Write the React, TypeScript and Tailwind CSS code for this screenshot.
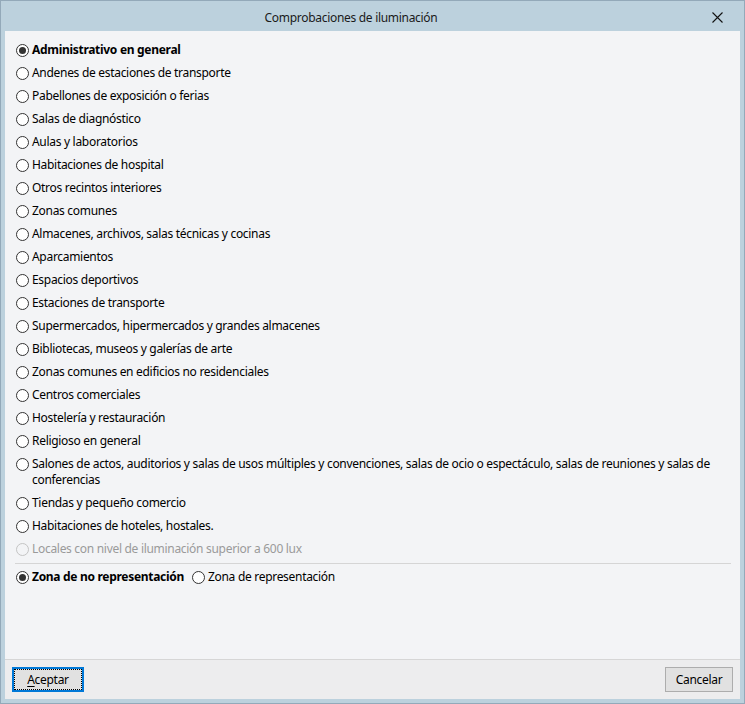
import React from "react";

const items: { label: string; checked?: boolean; disabled?: boolean }[] = [
  { label: "Administrativo en general", checked: true },
  { label: "Andenes de estaciones de transporte" },
  { label: "Pabellones de exposición o ferias" },
  { label: "Salas de diagnóstico" },
  { label: "Aulas y laboratorios" },
  { label: "Habitaciones de hospital" },
  { label: "Otros recintos interiores" },
  { label: "Zonas comunes" },
  { label: "Almacenes, archivos, salas técnicas y cocinas" },
  { label: "Aparcamientos" },
  { label: "Espacios deportivos" },
  { label: "Estaciones de transporte" },
  { label: "Supermercados, hipermercados y grandes almacenes" },
  { label: "Bibliotecas, museos y galerías de arte" },
  { label: "Zonas comunes en edificios no residenciales" },
  { label: "Centros comerciales" },
  { label: "Hostelería y restauración" },
  { label: "Religioso en general" },
  {
    label:
      "Salones de actos, auditorios y salas de usos múltiples y convenciones, salas de ocio o espectáculo, salas de reuniones y salas de conferencias",
  },
  { label: "Tiendas y pequeño comercio" },
  { label: "Habitaciones de hoteles, hostales." },
  { label: "Locales con nivel de iluminación superior a 600 lux", disabled: true },
];

function Radio({ checked, disabled }: { checked?: boolean; disabled?: boolean }) {
  return (
    <span
      className={
        "mt-[1.5px] flex h-[13px] w-[13px] shrink-0 items-center justify-center rounded-full border " +
        (disabled ? "border-[#c4c4c4] bg-[#f3f4f6]" : "border-[#333333] bg-white")
      }
    >
      {checked && <span className="h-[7px] w-[7px] rounded-full bg-[#333333]" />}
    </span>
  );
}

export default function App() {
  return (
    <div
      className="flex h-[704px] w-[745px] flex-col border border-[#93a9b9] bg-[#bcd1dd] text-[12px] leading-[16px] tracking-[-0.3px] text-black"
      style={{ fontFamily: '"Noto Sans", "Open Sans", sans-serif' }}
    >
      <div className="flex h-[30px] shrink-0 items-center pt-[3px]">
        <div className="flex-1 pl-[2px] text-center text-[12px] text-[#1a1a1a]">Comprobaciones de iluminación</div>
        <div className="mr-[9px] flex w-[36px] items-center justify-center">
          <svg width="11" height="11" viewBox="0 0 11 11">
            <path d="M0.5 0.5 L10.5 10.5 M10.5 0.5 L0.5 10.5" stroke="#111" strokeWidth="1.1" />
          </svg>
        </div>
      </div>
      <div className="mx-[4px] mb-[4px] flex flex-1 flex-col bg-[#f3f4f6]">
        <div className="flex flex-1 flex-col pl-[11px] pr-[10px] pt-[11px]">
          <div className="flex flex-col gap-[7px]">
            {items.map((it) => (
              <div key={it.label} className="flex items-start gap-[3px]">
                <Radio checked={it.checked} disabled={it.disabled} />
                <span
                  className={
                    (it.checked ? "font-bold " : "") + (it.disabled ? "text-[#9a9a9a]" : "text-black")
                  }
                >
                  {it.label}
                </span>
              </div>
            ))}
          </div>
          <div className="mt-[6px] ml-[-1px] mr-[-1px] h-px bg-[#d5d5d5]" />
          <div className="mt-[5px] flex items-start">
            <div className="flex items-start gap-[3px]">
              <Radio checked />
              <span className="font-bold">Zona de no representación</span>
            </div>
            <div className="ml-[8px] flex items-start gap-[3px]">
              <Radio />
              <span>Zona de representación</span>
            </div>
          </div>
        </div>
        <div className="flex h-[40px] shrink-0 items-center justify-between border-t border-[#d6d6d6] bg-[#ededee] px-[7px]">
          <button className="flex h-[25px] w-[72px] items-center justify-center border-2 border-[#0078d7] bg-[#e1e1e1] p-0">
            <span className="flex h-full w-full items-center justify-center border border-dotted border-black">
              <span className="underline underline-offset-2">A</span>ceptar
            </span>
          </button>
          <button className="flex h-[25px] w-[68px] items-center justify-center border border-[#adadad] bg-[#e1e1e1]">
            Cancelar
          </button>
        </div>
      </div>
    </div>
  );
}
